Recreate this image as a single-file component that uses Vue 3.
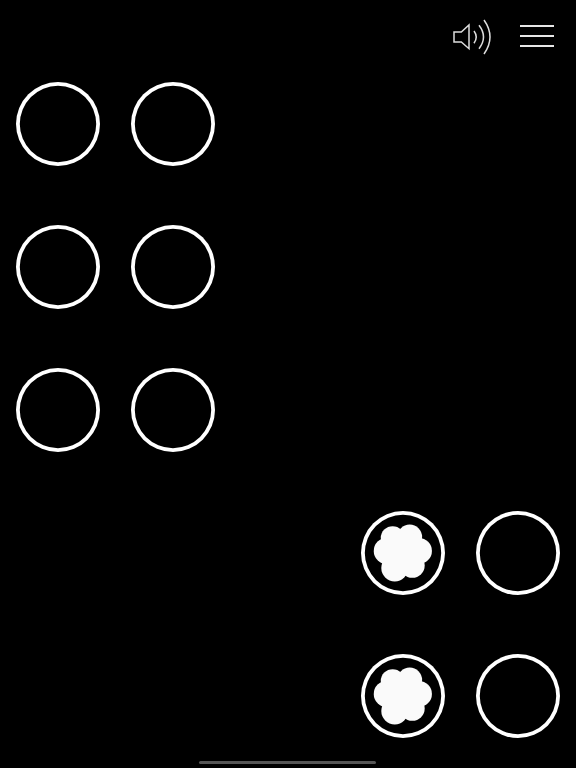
<script setup>
const filled = new Set([18, 23])
const cells = Array.from({ length: 25 }, (_, i) => i)
const occupied = new Set([0, 1, 5, 6, 10, 11, 18, 19, 23, 24])
const lobes = [
  [-10, -14.5, 11.5], [6.5, -15.5, 12], [15.5, -2, 12.5],
  [9, 12, 12], [-8, 14.5, 13], [-15.5, -2, 12.8], [0, -0.5, 21]
]
</script>

<template>
  <main class="screen">
    <header class="toolbar">
      <svg class="speaker" width="40" height="38" viewBox="0 0 40 38" fill="none" aria-label="Sound">
        <path d="M2 15H9.300L17 8V31.700L9.300 25H2Z" />
        <path d="M22 14Q26.500 20 22 26.300" />
        <path d="M27 8.300Q36 20 27 31.700" />
        <path d="M32 3Q44 20 32 37" />
      </svg>
      <button class="menu" aria-label="Menu"><span></span><span></span><span></span></button>
    </header>
    <section class="board">
      <div v-for="i in cells" :key="i" class="cell">
        <div v-if="occupied.has(i)" class="ring">
          <svg v-if="filled.has(i)" class="blob" viewBox="-30 -30 60 60" width="62" height="62">
            <circle v-for="(l, n) in lobes" :key="n" :cx="l[0]" :cy="l[1]" :r="l[2]" />
          </svg>
        </div>
      </div>
    </section>
    <div class="home-bar"></div>
  </main>
</template>

<style scoped>
.screen {
  position: relative;
  width: 576px;
  height: 768px;
  overflow: hidden;
  background: #000;
}
.toolbar {
  display: flex;
  justify-content: flex-end;
  align-items: center;
  gap: 28px;
  height: 72px;
  padding: 0 22px 0 0;
  box-sizing: border-box;
}
.speaker {
  display: block;
}
.speaker path {
  stroke: #ddd;
  stroke-width: 1.500;
}
.menu {
  display: flex;
  flex-direction: column;
  gap: 8px;
  width: 34px;
  padding: 0;
  border: 0;
  background: none;
}
.menu span {
  display: block;
  height: 2px;
  background: #e6e6e6;
}
.board {
  display: grid;
  grid-template-columns: repeat(5, 84px);
  grid-auto-rows: 84px;
  column-gap: 31px;
  row-gap: 59px;
  padding: 10px 16px 0;
}
.ring {
  display: flex;
  align-items: center;
  justify-content: center;
  width: 84px;
  height: 84px;
  box-sizing: border-box;
  border-radius: 50%;
  box-shadow: inset 0 0 0 3.800px #fff;
}
.blob {
  display: block;
  flex: none;
  fill: #fafafa;
}
.home-bar {
  position: absolute;
  left: 199px;
  bottom: 4px;
  width: 177px;
  height: 3px;
  border-radius: 2px;
  background: #555;
}
</style>
